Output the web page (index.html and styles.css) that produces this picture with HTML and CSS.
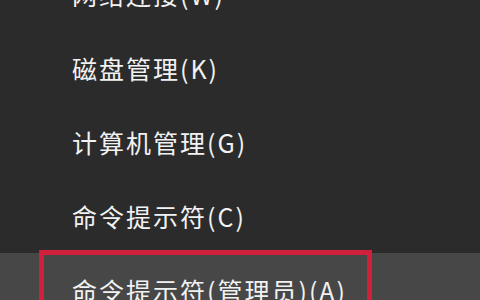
FILE: index.html
```html
<!DOCTYPE html>
<html lang="zh-CN">
<head>
<meta charset="utf-8">
<title>菜单</title>
<link rel="stylesheet" href="styles.css">
</head>
<body>
<ul class="menu">
  <li class="item">网络连接(W)</li>
  <li class="item">磁盘管理(K)</li>
  <li class="item">计算机管理(G)</li>
  <li class="item">命令提示符(C)</li>
  <li class="item item-hover">命令提示符(管理员)(A)<span class="mark"></span></li>
</ul>
</body>
</html>
```
FILE: styles.css
```css
html, body {
  margin: 0;
  padding: 0;
  width: 480px;
  height: 300px;
  overflow: hidden;
  background: #2b2b2b;
}
.menu {
  list-style: none;
  margin: -43px 0 0 0;
  padding: 0;
  font-family: "Noto Sans CJK SC", "Microsoft YaHei", sans-serif;
  font-size: 25px;
  letter-spacing: 2px;
  color: #f2f2f2;
}
.item {
  height: 74px;
  display: flex;
  align-items: center;
  padding-left: 72px;
  position: relative;
}
.item-hover {
  background: #474747;
}
.mark {
  position: absolute;
  left: 39px;
  top: -3px;
  width: 323px;
  height: 90px;
  border: 5px solid #d21f3b;
}
```
